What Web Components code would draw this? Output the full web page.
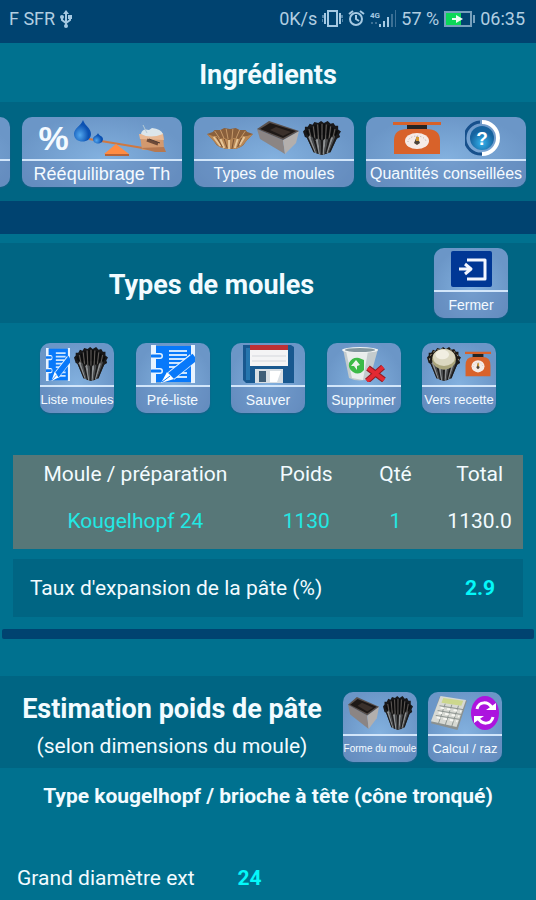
<!DOCTYPE html>
<html lang="fr">
<head>
<meta charset="utf-8">
<meta name="viewport" content="width=device-width, initial-scale=1">
<title>Ingrédients</title>
<style>
    body {
        margin: 0;
        background-color: #00718f;
        color: #f2fbff;
        font-family: Roboto, "Liberation Sans", sans-serif;
        font-size: 21px;
    }
</style>
</head>
<body>

<moules-page></moules-page>

<script>
// pleats of a fluted mould: inner wall seen from above, outer wall below it
function outerWall(count) {
    const tones = ["#1c1c1d", "#8e9193", "#4a4c4e"];
    let out = "";
    for (let i = 0; i < count; i++) {
        const a = 3 + 34 * i / count;
        const b = 3 + 34 * (i + 1) / count;
        const c = 11 + 18 * i / count;
        const d = 11 + 18 * (i + 1) / count;
        const y = 15 + 6 * Math.sin(Math.PI * (i + 0.5) / count);
        const end = 32 + 3 * Math.sin(Math.PI * (i + 0.5) / count);
        out += `<path fill="${tones[i % 3]}" d="M${a} ${y}L${(a + b) / 2} ${y - 2}L${b} ${y}L${d} ${end}L${(c + d) / 2} ${end + 1}L${c} ${end}Z"/>`;
    }
    return out;
}

function innerWall(count) {
    let out = "";
    for (let i = 0; i < count; i++) {
        const x = 4 + 32 * i / (count - 1);
        const y = 10 - 7 * Math.sin(Math.PI * i / (count - 1));
        out += `<path stroke="${i % 2 ? "#69645f" : "#0c0c0c"}" stroke-width="${i % 2 ? 1 : 2}" d="M${x} ${y}L${20 + (x - 20) * 0.8} 20"/>`;
    }
    return out;
}

const rim = "M1 14L0 11L2 9L2 6L5 6L7 3L10 4L12 1L16 2L19 0L22 2L26 0L29 3L32 2L34 5L37 5L37 9L40 11L38 14L39 17L35 19L34 21L28 22L20 24L12 22L6 21L5 18L2 17Z";

const icons = {
    kougelhopf: `<svg viewBox="0 0 40 36">
        <path fill="#18181a" d="${rim}"/><path fill="#2a2b2c" d="M3 15L11 33L20 36L29 33L37 15Z"/>${innerWall(15)}${outerWall(13)}
    </svg>`,

    praline: `<svg viewBox="0 0 40 36">
        <path fill="#1d1916" d="${rim}"/><path fill="#2a2b2c" d="M3 15L11 33L20 36L29 33L37 15Z"/>${outerWall(13)}
        <path fill="none" stroke="#c9bb96" stroke-dasharray="2 3" d="M3 14Q3 3 20 2Q37 3 37 14"/>
        <ellipse cx="20" cy="13" rx="14" ry="11" fill="#aaa57c"/>
        <ellipse cx="20" cy="11" rx="13" ry="9" fill="#dbd7c0"/>
        <ellipse cx="18" cy="8" rx="8" ry="5" fill="#f1eee1"/>
    </svg>`,

    caissette: `<svg viewBox="0 0 48 23">
        <path fill="#8a603c" d="M0 7L6 5L8 3L14 3L18 1L24 2L30 1L34 3L40 3L42 5L48 7L41 14Q36 23 24 22Q11 22 7 14Z"/>
        <path stroke="#c79a69" d="M8 4L13 11M14 3L18 12M20 2L22 12M27 2L26 12M34 3L30 12M40 4L35 11"/>
        <path fill="#b88755" d="M0 7L6 9L10 9L14 12L18 11L23 13L28 11L33 12L37 9L42 9L48 7L40 15Q35 23 24 22Q12 22 8 15Z"/>
        <path stroke="#e7c698" stroke-width="2" d="M7 10L14 19M14 12L18 21M23 13V22M32 12L29 21M39 10L34 18"/>
        <path stroke="#765033" d="M10 10L16 20M18 12L21 21M28 12L26 22M36 11L32 20"/>
    </svg>`,

    cake: `<svg viewBox="0 0 42 34">
        <path fill="#8b8584" d="M0 8L3 18L28 33L26 19Z"/>
        <path fill="#b3afad" d="M26 19L42 10L39 22L28 33Z"/>
        <path fill="#5a514d" d="M0 8L12 0L42 10L26 19Z"/>
        <path fill="#1e1917" d="M3 8L13 2L39 10L26 17Z"/>
        <path fill="#3a302b" d="M13 9L19 6L34 11L26 15Z"/>
    </svg>`,

    balance: `<svg viewBox="0 0 93 38">
        <defs><radialGradient id="d" cx="35%" cy="70%"><stop offset="0" stop-color="#52a7ee"/><stop offset="1" stop-color="#0b51b2"/></radialGradient></defs>
        <path stroke="#cf7841" stroke-width="2" d="M16 20L70 29"/>
        <path fill="#ff8c43" d="M43 25L56 35H31Z"/><path fill="#b76336" d="M32 35H56V37H32Z"/>
        <path fill="url(#d)" d="M10 1C12 7 18 9 18 15C18 25 1 25 1 15C1 9 8 7 10 1Z"/>
        <path fill="url(#d)" d="M25 14C26 17 30 17 30 20C30 26 20 26 20 20C20 17 24 17 25 14Z"/>
        <path fill="#d3996e" d="M67 16L90 14L91 30L69 31Z"/><path fill="#e8b893" d="M66 15L90 15L91 21L67 20Z"/>
        <path fill="#b67850" d="M67 29L91 28L93 33H82Z"/>
        <path fill="#dce6eb" d="M68 15Q69 9 76 11L79 9Q88 10 90 15Q77 20 68 15Z"/>
        <path stroke="#b4c9d5" d="M70 6L74 14"/>
        <path stroke="#6d4a38" stroke-width="3" d="M74 21L85 25"/><path stroke="#4f3b33" d="M76 20L87 24"/>
    </svg>`,

    scale: `<svg viewBox="0 0 48 34">
        <path fill="#262423" d="M14 3H34V10H14Z"/>
        <path fill="#d8622a" d="M0 1H48V4H0ZM1 33V19Q1 8 15 8H33Q47 8 47 19V33Z"/>
        <ellipse cx="24" cy="20" rx="12" ry="8" fill="#f5ebe6"/>
        <path stroke="#b6aaa3" stroke-dasharray="1 2" fill="none" d="M15 21A9 6 0 0 1 33 21"/>
        <path fill="#4b4338" d="M21 22L24 15L27 22L24 24Z"/><path fill="#d69c34" d="M23 16H26V20H23Z"/>
    </svg>`,

    question: `<svg viewBox="0 0 35 36">
        <defs><radialGradient id="q" cy="70%"><stop offset="0" stop-color="#34b3ed"/><stop offset="1" stop-color="#16639f"/></radialGradient></defs>
        <path fill="none" stroke="#17508c" stroke-width="3" d="M17 34A16 16 0 0 1 15 2"/>
        <path fill="none" stroke="#fff" stroke-width="4" d="M17 2A16 16 0 1 1 17 34"/>
        <circle cx="17" cy="18" r="12" fill="url(#q)"/>
        <text x="17" y="25" text-anchor="middle" fill="#fff" font-family="Liberation Sans, sans-serif" font-weight="700" font-size="19">?</text>
    </svg>`,

    exit: `<svg viewBox="0 0 41 36">
        <rect width="41" height="36" rx="2" fill="#003795"/>
        <path fill="none" stroke="#f3f7ff" stroke-width="3" stroke-linejoin="round" d="M16 9H34V28H16M8 18H20M14 13L20 18L14 23"/>
    </svg>`,

    notepad: `<svg viewBox="0 0 44 38">
        <path fill="#e7f3ff" d="M0 0H5V38H0ZM40 0H44V38H40Z"/><path fill="#0879fa" d="M5 1H40V37H5Z"/>
        <path stroke="#e7f3ff" stroke-width="6" stroke-linecap="round" d="M3 11H9M3 26H9"/>
        <path stroke="#0879fa" stroke-width="3" stroke-linecap="round" d="M1 11H9M1 26H9"/>
        <path stroke="#cce5ff" stroke-width="2" d="M18 6H36M18 10H36M18 14H34M18 18H30M18 22H26M27 28H36M25 32H36"/>
        <path stroke="#e7f3ff" stroke-width="10" d="M42 13L20 31"/><path stroke="#0879fa" stroke-width="8" d="M44 12L20 31"/>
        <path fill="#fff" d="M16 27L23 34L10 38Z"/><path stroke="#0879fa" d="M11 37L19 31"/>
    </svg>`,

    floppy: `<svg viewBox="0 0 51 38">
        <path fill="#18588f" d="M0 0H48L51 2V38H3L0 35Z"/><path fill="#2676ae" d="M3 3H7V35H3Z"/>
        <path fill="#f4f4f5" d="M7 0H45V21H7Z"/><path fill="#bd3034" d="M7 0H45V5H7Z"/>
        <path stroke="#d4d7dc" d="M9 11H43M9 16H43"/>
        <path fill="#d9dfe4" d="M12 24H40V38H12Z"/><path fill="#3e5e77" d="M16 26H23V37H16Z"/><path fill="#fff" d="M27 26H38L34 37H27Z"/>
    </svg>`,

    trash: `<svg viewBox="0 0 44 36">
        <path fill="#c3cbcd" d="M1 3L7 32Q18 37 28 32L36 3Z"/><path fill="#e9edec" d="M4 5L10 32L21 34L26 5Z"/>
        <ellipse cx="18" cy="4" rx="18" ry="3" fill="#eef1f1"/><ellipse cx="18" cy="4" rx="15" ry="2" fill="#84969e"/>
        <path fill="#3cba47" d="M7 17Q10 11 17 12L22 14V24Q17 30 11 26Q6 23 7 17Z"/>
        <path fill="#edf3ed" d="M14 14L18 19L15 20V24L12 20H9Z"/>
        <path stroke="#941d23" stroke-width="6" d="M26 22L42 34M41 21L25 35"/><path stroke="#e32933" stroke-width="4" d="M26 22L42 34M41 21L25 35"/>
    </svg>`,

    calculator: `<svg viewBox="0 0 38 35">
        <path fill="#8b9190" d="M9 1L38 5L28 35L0 28Z"/><path fill="#d7d9d3" d="M10 0L37 4L27 32L0 26Z"/>
        <path fill="#ccd78d" d="M13 2L34 5L32 10L11 7Z"/>
        <path stroke="#8b928e" fill="none" d="M9 10L34 14M7 15L32 19M5 20L30 24M15 8L8 28M22 9L15 30M29 10L22 31"/>
        <path stroke="#f7f7f2" stroke-dasharray="4 3" stroke-width="2" d="M10 12L32 16M8 17L30 21M6 22L28 26"/>
    </svg>`,

    reset: `<svg viewBox="0 0 28 34">
        <ellipse cx="14" cy="17" rx="14" ry="17" fill="#ac14de"/>
        <path fill="none" stroke="#fff" stroke-width="3" d="M6 13C8 5 17 5 21 12M22 21C20 29 11 29 7 22"/>
        <path fill="#fff" d="M15 14H25V7ZM13 20H3V27Z"/>
    </svg>`,

    usb: `<svg viewBox="0 0 12 18">
        <path fill="none" stroke="#a5c9e2" stroke-width="2" d="M6 3V15M2 8V10L6 13L10 10V7"/>
        <path fill="#a5c9e2" d="M3 4L6 0L9 4ZM8 5H12V9H8Z"/><circle cx="2" cy="7" r="2" fill="#a5c9e2"/><circle cx="6" cy="16" r="2" fill="#a5c9e2"/>
    </svg>`,

    vibrate: `<svg viewBox="0 0 21 17">
        <path fill="none" stroke="#a5c9e2" stroke-width="2" d="M6 1H15V16H6ZM3 3V14M18 3V14"/><path stroke="#a5c9e2" d="M1 5V8M0 9V12M20 5V8M21 9V12"/>
    </svg>`,

    alarm: `<svg viewBox="0 0 17 17">
        <circle cx="8" cy="9" r="6" fill="none" stroke="#a5c9e2" stroke-width="2"/>
        <path fill="none" stroke="#a5c9e2" stroke-width="2" d="M1 4L5 1M12 1L16 4M8 5V9L11 11"/>
    </svg>`,

    signal: `<svg viewBox="0 0 26 18">
        <text x="0" y="8" fill="#a5c9e2" font-family="Roboto, sans-serif" font-weight="700" font-size="8">4G</text>
        <path fill="#a5c9e2" d="M9 14H11V17H9ZM13 11H15V17H13ZM17 7H19V17H17Z"/><path fill="#3d7196" d="M1 12H3V14H1ZM5 12H7V14H5ZM21 4H23V17H21ZM25 0H26V17H25Z"/>
    </svg>`,

    battery: `<svg viewBox="0 0 31 16">
        <path fill="none" stroke="#76a0bd" stroke-width="2" d="M1 1H27V15H1Z"/><path fill="#76a0bd" d="M29 4H31V12H29Z"/>
        <path fill="#0bd858" d="M2 2H17V14H2Z"/><path fill="#e9fff1" d="M8 7H12V4L19 8L12 12V9H8Z"/>
    </svg>`
};

class AppIcon extends HTMLElement {

    constructor() {
        super();
        this.shadow = this.attachShadow({ mode: "open" });
    }

    connectedCallback() {
        const width = this.getAttribute("width");
        const height = this.getAttribute("height");

        this.shadow.innerHTML =
        /*html*/`
        <style>
            :host { display: block; flex: none; width: ${width}px; height: ${height}px; }
            svg { display: block; width: 100%; height: 100%; }
        </style>
        ${icons[this.getAttribute("name")]}
        `;
        const svg = this.shadow.querySelector("svg");
        svg.setAttribute("preserveAspectRatio", "none");
        svg.setAttribute("aria-hidden", "true");
    }
}

class TileButton extends HTMLElement {

    constructor() {
        super();
        this.shadow = this.attachShadow({ mode: "open" });
    }

    connectedCallback() {
        this.shadow.innerHTML =
        /*html*/`
        <style>
            :host {
                display: block;
                flex: none;
                width: 74px;
            }
            :host([wide]) {
                width: 160px;
            }
            button {
                display: flex;
                flex-direction: column;
                width: 100%;
                height: 70px;
                padding: 0;
                border: none;
                border-radius: 10px;
                overflow: hidden;
                background: radial-gradient(ellipse at 50% 60%, #83b1df, #6b96c7 75%);
                box-shadow: 0 1px 2px #1a5e86;
                color: #f4faff;
                font-family: "Liberation Sans", sans-serif;
                font-size: 14px;
                cursor: pointer;
            }
            .pictures {
                display: flex;
                align-items: center;
                justify-content: center;
                gap: 4px;
                width: 100%;
                height: 42px;
            }
            .label {
                box-sizing: border-box;
                width: 100%;
                flex: 1;
                border-top: 2px solid #d2e6fa;
                background-color: #5c80b466;
                line-height: 26px;
                text-align: center;
                white-space: nowrap;
            }
            :host([wide]) button { font-size: 16px; }
            :host([wide][large]) button { font-size: 18px; }
            :host([small]) button { font-size: 13px; }
            :host([tiny]) button { font-size: 10px; }
        </style>

        <button type="button" ${this.hasAttribute("hint") ? `aria-label="${this.getAttribute("hint")}"` : ""}>
            <span class="pictures"><slot name="icon"></slot></span>
            <span class="label"><slot></slot></span>
        </button>
        `;
    }
}

class StatusBar extends HTMLElement {

    constructor() {
        super();
        this.shadow = this.attachShadow({ mode: "open" });
    }

    connectedCallback() {
        this.shadow.innerHTML =
        /*html*/`
        <style>
            :host {
                display: flex;
                align-items: center;
                justify-content: space-between;
                box-sizing: border-box;
                height: 43px;
                padding: 0 11px 6px 9px;
                background-color: #004370;
                color: #b1cee1;
                font-size: 18px;
            }
            div { display: flex; align-items: center; gap: 5px; }
        </style>

        <div><span>F SFR</span><app-icon name="usb" width="12" height="18"></app-icon></div>
        <div>
            <span>0K/s</span>
            <app-icon name="vibrate" width="21" height="17"></app-icon>
            <app-icon name="alarm" width="17" height="17"></app-icon>
            <app-icon name="signal" width="26" height="18"></app-icon>
            <span>57 %</span>
            <app-icon name="battery" width="31" height="16"></app-icon>
            <span>06:35</span>
        </div>
        `;
    }
}

class MouleTable extends HTMLElement {

    constructor() {
        super();
        this.shadow = this.attachShadow({ mode: "open" });
    }

    connectedCallback() {
        this.shadow.innerHTML =
        /*html*/`
        <style>
            :host { display: block; }
            table {
                width: 100%;
                table-layout: fixed;
                border-collapse: collapse;
                background-color: #577778;
            }
            th, td { padding: 0; font-weight: 400; text-align: center; }
            th { height: 37px; }
            td { height: 57px; }
            .name { width: 48%; }
            .weight { width: 19%; }
            .count { width: 16%; }
            input {
                box-sizing: border-box;
                width: 100%;
                padding: 0;
                border: none;
                outline: none;
                background: none;
                color: #22e8e3;
                font: inherit;
                text-align: center;
            }
        </style>

        <table>
            <thead>
                <tr>
                    <th class="name" id="name">Moule / préparation</th>
                    <th class="weight" id="weight">Poids</th>
                    <th class="count" id="count">Qté</th>
                    <th>Total</th>
                </tr>
            </thead>
            <tbody>
                <tr>
                    <td><input type="text" aria-labelledby="name" value="Kougelhopf 24"></td>
                    <td><input type="text" inputmode="numeric" aria-labelledby="weight" value="1130"></td>
                    <td><input type="text" inputmode="numeric" aria-labelledby="count" value="1"></td>
                    <td>1130.0</td>
                </tr>
            </tbody>
        </table>
        `;
    }
}

class ValueField extends HTMLElement {

    constructor() {
        super();
        this.shadow = this.attachShadow({ mode: "open" });
    }

    connectedCallback() {
        this.shadow.innerHTML =
        /*html*/`
        <style>
            :host { display: flex; align-items: center; gap: 12px; }
            input {
                box-sizing: border-box;
                width: 86px;
                padding: 0;
                border: none;
                outline: none;
                background: none;
                color: #04f8fa;
                font: inherit;
                font-weight: 700;
                text-align: center;
            }
        </style>

        <label for="value"><slot></slot></label>
        <input id="value" type="text" inputmode="decimal" value="${this.getAttribute("value")}">
        `;
    }
}

class MoulesPage extends HTMLElement {

    constructor() {
        super();
        this.shadow = this.attachShadow({ mode: "open" });
    }

    connectedCallback() {
        this.shadow.innerHTML =
        /*html*/`
        <style>
            :host { display: block; overflow: hidden; }
            h1, h2, h3, p { margin: 0; }
            h1 {
                padding-top: 5px;
                font-size: 27px;
                line-height: 54px;
                text-align: center;
            }
            h2 { font-size: 27px; line-height: 32px; white-space: nowrap; }
            h3 {
                padding: 12px 0;
                font-size: 21px;
                line-height: 32px;
                text-align: center;
            }
            .band { background-color: #006583; }
            .strip {
                display: flex;
                justify-content: flex-end;
                gap: 12px;
                padding: 15px 10px 14px;
                overflow: hidden;
            }
            .percent { font-size: 34px; font-weight: 700; }
            .separator {
                height: 33px;
                margin-bottom: 9px;
                background-color: #004370;
            }
            .heading {
                display: flex;
                align-items: center;
                padding: 5px 28px 5px 0;
            }
            .heading h2 { flex: 1; padding: 3px 11px 0 0; text-align: center; }
            .toolbar {
                display: flex;
                justify-content: space-between;
                padding: 20px 40px 42px;
            }
            moule-table { margin: 0 13px; }
            .rate {
                justify-content: space-between;
                height: 58px;
                margin: 10px 13px;
                padding: 0 0 0 17px;
            }
            hr {
                height: 10px;
                margin: 12px 2px 37px;
                border: none;
                border-radius: 2px;
                background-color: #004370;
            }
            .estimate {
                display: flex;
                align-items: center;
                gap: 11px;
                padding: 16px 34px 6px 0;
            }
            .estimate div { flex: 1; padding-left: 12px; text-align: center; }
            .estimate p { padding-top: 5px; line-height: 32px; }
            .diameter { margin: 42px 17px 0; }
        </style>

        <status-bar></status-bar>
        <h1>Ingrédients</h1>
        <nav class="band strip">
            <tile-button wide hint="Précédent"></tile-button>
            <tile-button wide large>
                <span slot="icon" class="percent">%</span>
                <app-icon slot="icon" name="balance" width="93" height="38"></app-icon>
                Rééquilibrage Th
            </tile-button>
            <tile-button wide>
                <app-icon slot="icon" name="caissette" width="46" height="23"></app-icon>
                <app-icon slot="icon" name="cake" width="42" height="34"></app-icon>
                <app-icon slot="icon" name="kougelhopf" width="38" height="34"></app-icon>
                Types de moules
            </tile-button>
            <tile-button wide>
                <app-icon slot="icon" name="scale" width="48" height="34"></app-icon>
                <app-icon slot="icon" name="question" width="35" height="36" style="margin-left: 20px"></app-icon>
                Quantités conseillées
            </tile-button>
        </nav>
        <div class="separator"></div>

        <section class="band heading">
            <h2>Types de moules</h2>
            <tile-button>
                <app-icon slot="icon" name="exit" width="41" height="36"></app-icon>
                Fermer
            </tile-button>
        </section>

        <div class="toolbar">
            <tile-button small>
                <app-icon slot="icon" name="notepad" width="24" height="33"></app-icon>
                <app-icon slot="icon" name="kougelhopf" width="34" height="34"></app-icon>
                Liste moules
            </tile-button>
            <tile-button>
                <app-icon slot="icon" name="notepad" width="44" height="38"></app-icon>
                Pré-liste
            </tile-button>
            <tile-button>
                <app-icon slot="icon" name="floppy" width="51" height="38"></app-icon>
                Sauver
            </tile-button>
            <tile-button>
                <app-icon slot="icon" name="trash" width="44" height="36"></app-icon>
                Supprimer
            </tile-button>
            <tile-button small>
                <app-icon slot="icon" name="praline" width="34" height="34"></app-icon>
                <app-icon slot="icon" name="scale" width="26" height="26"></app-icon>
                Vers recette
            </tile-button>
        </div>

        <moule-table></moule-table>
        <value-field class="band rate" value="2.9">Taux d'expansion de la pâte (%)</value-field>
        <hr>

        <section class="band estimate">
            <div>
                <h2>Estimation poids de pâte</h2>
                <p>(selon dimensions du moule)</p>
            </div>
            <tile-button tiny>
                <app-icon slot="icon" name="cake" width="31" height="33"></app-icon>
                <app-icon slot="icon" name="kougelhopf" width="30" height="34"></app-icon>
                Forme du moule
            </tile-button>
            <tile-button small>
                <app-icon slot="icon" name="calculator" width="36" height="34"></app-icon>
                <app-icon slot="icon" name="reset" width="28" height="34"></app-icon>
                Calcul / raz
            </tile-button>
        </section>

        <h3>Type kougelhopf / brioche à tête (cône tronqué)</h3>
        <value-field class="diameter" value="24">Grand diamètre ext</value-field>
        `;
    }
}

customElements.define("app-icon", AppIcon);
customElements.define("tile-button", TileButton);
customElements.define("status-bar", StatusBar);
customElements.define("moule-table", MouleTable);
customElements.define("value-field", ValueField);
customElements.define("moules-page", MoulesPage);
</script>
</body>
</html>
